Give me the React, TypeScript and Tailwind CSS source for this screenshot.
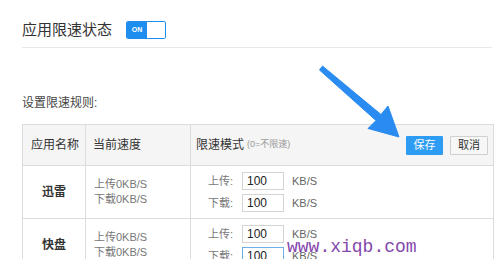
import React from 'react';

const rows = [
  { name: '迅雷', focus: false },
  { name: '快盘', focus: true },
];

const SpeedInput = ({ label, focus }: { label: string; focus?: boolean }) => (
  <div className="flex items-center h-[18px]">
    <span className="w-[34px] text-[11px] text-[#777]">{label}:</span>
    <div
      className={`w-[42px] h-[18px] flex items-center pl-[4px] text-[12px] text-[#222] bg-white border ${
        focus ? 'border-[#6aaeea]' : 'border-[#d4d4d4]'
      }`}
    >
      100
    </div>
    <span className="ml-[8px] text-[11px] text-[#666]">KB/S</span>
  </div>
);

export default function App() {
  return (
    <div
      className="relative w-[501px] h-[259px] overflow-hidden bg-white text-[#333]"
      style={{ fontFamily: '"Liberation Sans", "Noto Sans CJK SC", sans-serif' }}
    >
      <div className="pl-[22px] pr-[9px] pt-[21px]">
        {/* Header */}
        <div className="flex items-center gap-[14px] h-[18px]">
          <span className="text-[15px] leading-[18px] text-[#333]">应用限速状态</span>
          <div className="flex w-[40px] h-[18px] border border-[#1d8ef0] rounded-[2px] overflow-hidden">
            <div className="w-[20px] bg-[#1d8ef0] flex items-center justify-center text-[7px] font-bold text-white">
              ON
            </div>
            <div className="flex-1 bg-white" />
          </div>
        </div>
        <div className="mt-[8px] border-b border-[#e8e8e8]" />

        <div className="mt-[47px] text-[12px] leading-[16px] text-[#444]">设置限速规则:</div>

        {/* Table */}
        <div className="mt-[13px] mr-[-2px] border-l border-t border-[#dcdcdc]">
          <div className="grid grid-cols-[63px_105px_1fr] h-[41px] bg-[#f5f5f5] border-b border-[#dcdcdc]">
            <div className="border-r border-[#dcdcdc] flex items-center pl-[8px] text-[12px]">应用名称</div>
            <div className="border-r border-[#dcdcdc] flex items-center pl-[7px] text-[12px]">当前速度</div>
            <div className="border-r border-[#dcdcdc] flex items-center pl-[5px] pr-[5px]">
              <span className="text-[12px]">限速模式</span>
              <span className="ml-[3px] text-[9px] text-[#999]">(0=不限速)</span>
              <div className="ml-auto flex gap-[7px]">
                <div className="w-[37px] h-[19px] bg-[#2d9cf2] text-white text-[11px] flex items-center justify-center rounded-[1px]">
                  保存
                </div>
                <div className="w-[38px] h-[19px] bg-[#f7f7f7] border border-[#d0d0d0] text-[#333] text-[11px] flex items-center justify-center rounded-[1px]">
                  取消
                </div>
              </div>
            </div>
          </div>

          {rows.map((r) => (
            <div key={r.name} className="grid grid-cols-[63px_105px_1fr] border-b border-[#dcdcdc]">
              <div className="border-r border-[#dcdcdc] flex items-center justify-center text-[12px] font-bold text-[#333]">
                {r.name}
              </div>
              <div className="border-r border-[#dcdcdc] flex flex-col justify-center pl-[8px] text-[11px] leading-[15px] text-[#777]">
                <span>上传0KB/S</span>
                <span>下载0KB/S</span>
              </div>
              <div className="border-r border-[#dcdcdc] pl-[17px] pt-[6px] pb-[6px] flex flex-col gap-[4px]">
                <SpeedInput label="上传" />
                <SpeedInput label="下载" focus={r.focus} />
              </div>
            </div>
          ))}
        </div>
      </div>

      {/* Annotation arrow */}
      <svg className="absolute left-0 top-0 pointer-events-none" width="501" height="259" viewBox="0 0 501 259">
        <polygon
          points="322.5,66 381,114.5 388,106 399,137 368,128.5 376,120.5 319.5,70"
          fill="#2a8cf0"
          stroke="#2a8cf0"
          strokeWidth="1"
          strokeLinejoin="round"
        />
      </svg>

      {/* Watermark */}
      <div
        className="absolute left-[287px] top-[236px] text-[18px] leading-[22px] text-[#8448ac]"
        style={{ fontFamily: '"Liberation Mono", monospace' }}
      >
        www.xiqb.com
      </div>
    </div>
  );
}
